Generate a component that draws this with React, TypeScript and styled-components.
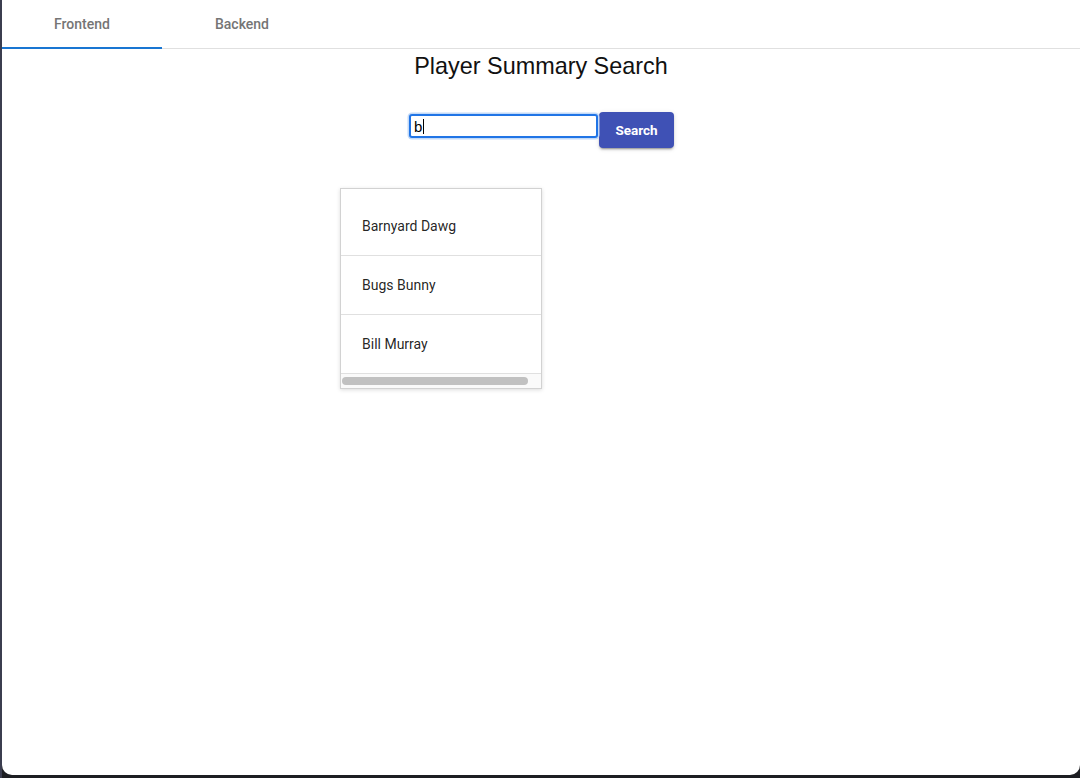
import React from "react";
import styled, { createGlobalStyle } from "styled-components";

const Global = createGlobalStyle`
  html, body { margin: 0; padding: 0; }
  body {
    background: linear-gradient(to right, #3b3d4f 0 2px, #1d1e22 2px);
    font-family: Roboto, "Liberation Sans", Arial, sans-serif;
    height: 778px;
    overflow: hidden;
  }
`;

const Desktop = styled.div`
  display: flex;
  flex-direction: column;
  height: 778px;
`;

const Window = styled.div`
  margin-left: 2px;
  height: 775px;
  background: #ffffff;
  border-bottom-left-radius: 10px;
  border-bottom-right-radius: 10px;
  display: flex;
  flex-direction: column;
  overflow: hidden;
`;

const TabBar = styled.div`
  display: flex;
  height: 48px;
  border-bottom: 1px solid #e0e0e0;
`;

const Tab = styled.div<{ $active?: boolean }>`
  width: 160px;
  display: flex;
  align-items: center;
  justify-content: center;
  font-family: Roboto, sans-serif;
  font-weight: 500;
  font-size: 14px;
  color: #757575;
  box-sizing: border-box;
  border-bottom: 2px solid ${(p) => (p.$active ? "#1976d2" : "transparent")};
  margin-bottom: -1px;
  padding-top: 1px;
`;

const Title = styled.h1`
  margin: 3px 0 0;
  text-align: center;
  font-family: "Liberation Sans", Arial, sans-serif;
  font-weight: 400;
  font-size: 23.4px;
  line-height: 28px;
  color: #111;
`;

const SearchRow = styled.div`
  margin-top: 32px;
  display: flex;
  justify-content: center;
  align-items: flex-start;
`;

const InputBox = styled.div`
  position: relative;
  margin: 2px 1px 0;
`;

const SearchInput = styled.input`
  display: block;
  box-sizing: border-box;
  width: 189px;
  height: 24px;
  margin: 0;
  padding: 0 0 0 3px;
  border: 2px solid #2175e6;
  border-radius: 3px;
  box-shadow: 0 0 0 1.5px #c3daf8;
  outline: none;
  font-family: "Liberation Sans", Arial, sans-serif;
  font-size: 15px;
  color: #000;
  caret-color: transparent;
  background: #fff;
`;

const Caret = styled.span`
  position: absolute;
  left: 14px;
  top: 5px;
  width: 1px;
  height: 15px;
  background: #000;
`;

const SearchButton = styled.button`
  width: 75px;
  height: 36px;
  border: none;
  border-radius: 4px;
  background: #3f51b5;
  color: #fff;
  font-family: Roboto, sans-serif;
  font-weight: 700;
  font-size: 13.5px;
  box-shadow: 0 3px 1px -2px rgba(0, 0, 0, 0.2), 0 2px 2px 0 rgba(0, 0, 0, 0.14),
    0 1px 5px 0 rgba(0, 0, 0, 0.12);
  cursor: pointer;
`;

const ResultsArea = styled.div`
  margin-top: 40px;
  display: flex;
  justify-content: center;
`;

const ResultList = styled.div`
  width: 202px;
  margin-right: 200px;
  box-sizing: border-box;
  border: 1px solid #d2d2d2;
  box-shadow: 0 1px 4px rgba(0, 0, 0, 0.14);
  padding-top: 8px;
  background: #fff;
`;

const ResultItem = styled.div`
  height: 58px;
  border-bottom: 1px solid #e0e0e0;
  display: flex;
  align-items: center;
  padding-left: 21px;
  font-family: Roboto, sans-serif;
  font-size: 14px;
  color: rgba(0, 0, 0, 0.87);
  white-space: nowrap;
`;

const ScrollTrack = styled.div`
  height: 14px;
  background: #fafafa;
  padding: 3px 0 0 1px;
  box-sizing: border-box;
`;

const ScrollThumb = styled.div`
  width: 186px;
  height: 8px;
  border-radius: 4px;
  background: #c1c1c1;
`;

const players = ["Barnyard Dawg", "Bugs Bunny", "Bill Murray"];

export default function App() {
  return (
    <>
      <Global />
      <Desktop>
        <Window>
          <TabBar>
            <Tab $active>Frontend</Tab>
            <Tab>Backend</Tab>
          </TabBar>
          <Title>Player Summary Search</Title>
          <SearchRow>
            <InputBox>
              <SearchInput defaultValue="b" />
              <Caret />
            </InputBox>
            <SearchButton>Search</SearchButton>
          </SearchRow>
          <ResultsArea>
            <ResultList>
              {players.map((p) => (
                <ResultItem key={p}>{p}</ResultItem>
              ))}
              <ScrollTrack>
                <ScrollThumb />
              </ScrollTrack>
            </ResultList>
          </ResultsArea>
        </Window>
      </Desktop>
    </>
  );
}
